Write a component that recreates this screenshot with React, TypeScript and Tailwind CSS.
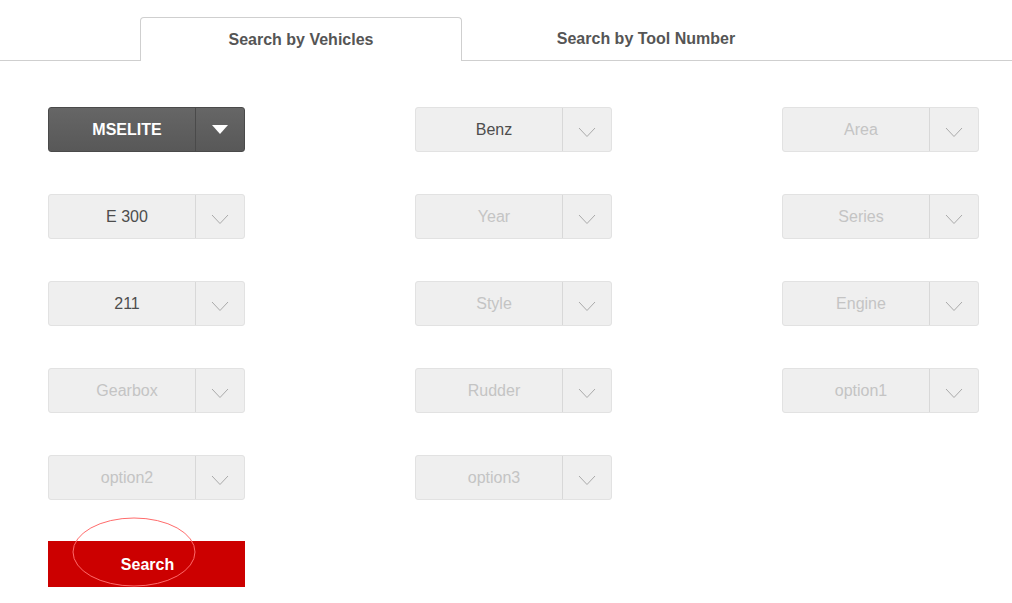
import React from 'react';

type Field = { label: string; state: 'dark' | 'value' | 'empty' };

const fields: Field[] = [
  { label: 'MSELITE', state: 'dark' },
  { label: 'Benz', state: 'value' },
  { label: 'Area', state: 'empty' },
  { label: 'E 300', state: 'value' },
  { label: 'Year', state: 'empty' },
  { label: 'Series', state: 'empty' },
  { label: '211', state: 'value' },
  { label: 'Style', state: 'empty' },
  { label: 'Engine', state: 'empty' },
  { label: 'Gearbox', state: 'empty' },
  { label: 'Rudder', state: 'empty' },
  { label: 'option1', state: 'empty' },
  { label: 'option2', state: 'empty' },
  { label: 'option3', state: 'empty' },
];

function Dropdown({ field }: { field: Field }) {
  if (field.state === 'dark') {
    return (
      <div className="flex h-[45px] w-[197px] rounded-[3px] border border-[#4a4a4a] bg-gradient-to-b from-[#666] to-[#585858]">
        <div className="flex w-[147px] items-center justify-center border-r border-[#4a4a4a] pl-[10px] text-[16px] font-bold text-white">
          {field.label}
        </div>
        <div className="flex flex-1 items-center justify-center">
          <svg width="16" height="10" viewBox="0 0 16 10">
            <path d="M0 0 L16 0 L8 9 Z" fill="#fff" />
          </svg>
        </div>
      </div>
    );
  }
  const text = field.state === 'value' ? 'text-[#4d4d4d]' : 'text-[#c4c4c4]';
  return (
    <div className="flex h-[45px] w-[197px] rounded-[3px] border border-[#e2e2e2] bg-[#efefef]">
      <div className={`flex w-[147px] items-center justify-center border-r border-[#d8d8d8] pl-[10px] text-[16px] ${text}`}>
        {field.label}
      </div>
      <div className="flex flex-1 items-center justify-center pt-[5px]">
        <svg width="18" height="11" viewBox="0 0 18 11">
          <path d="M1 1 L9 9.5 L17 1" fill="none" stroke="#aaa" strokeWidth="1" />
        </svg>
      </div>
    </div>
  );
}

export default function App() {
  return (
    <div className="h-[603px] w-[1012px] bg-white font-['Liberation_Sans',Arial,sans-serif]">
      <div className="pt-[17px]">
        <div className="flex h-[44px] border-b border-[#cfcfcf]">
          <div className="w-[140px]" />
          <div className="relative -mb-px flex w-[322px] items-center justify-center rounded-t-[4px] border border-b-0 border-[#cfcfcf] bg-white text-[16px] font-bold text-[#555]">
            Search by Vehicles
          </div>
          <div className="flex w-[368px] items-center justify-center text-[16px] font-bold text-[#555]">
            Search by Tool Number
          </div>
        </div>
      </div>

      <div className="grid grid-cols-[197px_197px_197px] gap-x-[170px] gap-y-[42px] pl-[48px] pt-[46px]">
        {fields.map((f) => (
          <Dropdown key={f.label} field={f} />
        ))}
      </div>

      <div className="pl-[48px] pt-[41px]">
        <div className="relative flex h-[46px] w-[197px] items-center justify-center bg-[#cc0000] pt-[1px] text-[16px] font-bold text-white">
          <span className="pl-[2px]">Search</span>
          <svg className="absolute left-[24px] top-[-24px]" width="124" height="70" viewBox="0 0 124 70">
            <ellipse cx="62" cy="35" rx="61" ry="34" fill="none" stroke="#ff6b6b" strokeWidth="1" />
          </svg>
        </div>
      </div>
    </div>
  );
}
